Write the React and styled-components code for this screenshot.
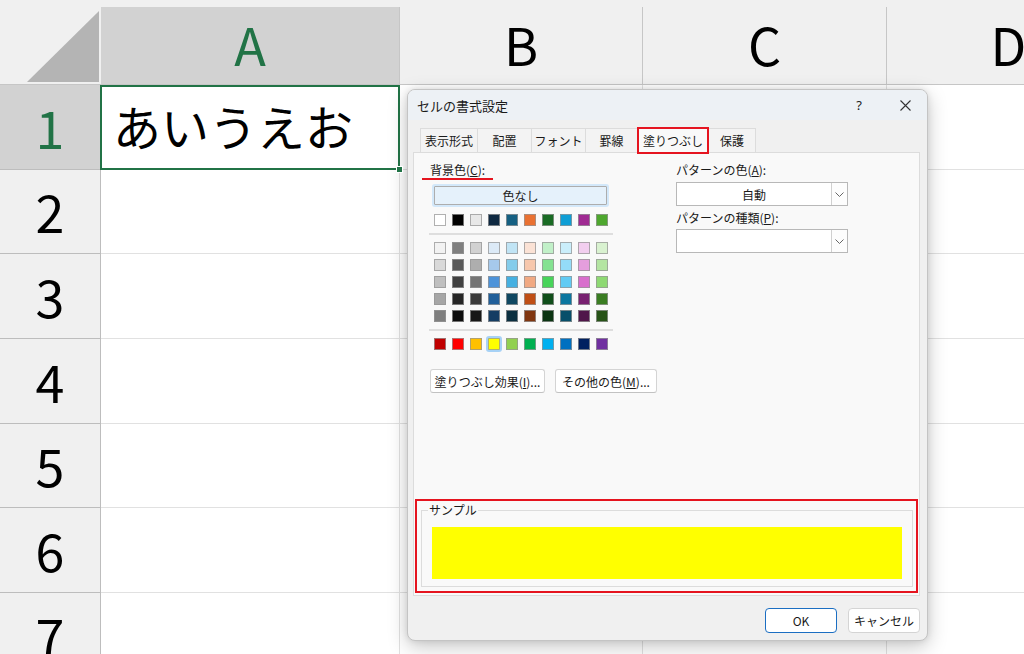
import React from "react";
import styled, { createGlobalStyle } from "styled-components";

const GlobalStyle = createGlobalStyle`
  * { box-sizing: border-box; }
  body {
    margin: 0;
    background: #f0f0f0;
    font-family: "Noto Sans CJK JP", "Noto Sans", sans-serif;
  }
`;

const columns = [
  { name: "A", selected: true },
  { name: "B" },
  { name: "C" },
  { name: "D" },
];

const themeRow = ["#ffffff", "#000000", "#e8e8e8", "#0e2841", "#156082", "#e97132", "#196b24", "#0f9ed5", "#a02b93", "#4ea72e"];

const tintRows = [
  ["#f2f2f2", "#7f7f7f", "#d1d1d1", "#dceaf7", "#c0e4f5", "#fbe2d5", "#c1f0c8", "#caeefb", "#f2ceef", "#d9f2d0"],
  ["#d9d9d9", "#595959", "#aeaeae", "#a6c9ec", "#83cceb", "#f7c7ac", "#84e291", "#94dcf8", "#e59edd", "#b4e5a2"],
  ["#bfbfbf", "#404040", "#747474", "#4d93d9", "#45b0e1", "#f1a983", "#47d45a", "#61cbf4", "#d86ecc", "#8ed973"],
  ["#a6a6a6", "#262626", "#3a3a3a", "#215f9a", "#0f4761", "#c04f15", "#104e1a", "#0b769f", "#782070", "#3a7d22"],
  ["#7f7f7f", "#0d0d0d", "#171717", "#153d63", "#0b2f40", "#803610", "#0b3412", "#074f6a", "#50164a", "#275317"],
];

const standardRow = ["#c00000", "#ff0000", "#ffc000", "#ffff00", "#92d050", "#00b050", "#00b0f0", "#0070c0", "#002060", "#7030a0"];

const tabs = [
  { label: "表示形式", width: 58 },
  { label: "配置", width: 55 },
  { label: "フォント", width: 55 },
  { label: "罫線", width: 53 },
  { label: "塗りつぶし", width: 72, active: true },
  { label: "保護", width: 48 },
];

function App() {
  return (
    <Page>
      <GlobalStyle />
      <Sheet>
        <Corner>
          <svg width="72" height="71" viewBox="0 0 72 71">
            <polygon points="0,71 72,0 72,71" fill="#b4b4b4" />
          </svg>
        </Corner>
        {columns.map((c) => (
          <ColHeader key={c.name} $selected={c.selected}>
            {c.name}
          </ColHeader>
        ))}
        {[1, 2, 3, 4, 5, 6, 7].map((row) => (
          <React.Fragment key={row}>
            <RowHeader $selected={row === 1}>{row}</RowHeader>
            {columns.map((c) =>
              row === 1 && c.name === "A" ? (
                <ActiveCell key={c.name}>
                  あいうえお
                  <FillHandle />
                </ActiveCell>
              ) : (
                <Cell key={c.name} />
              )
            )}
          </React.Fragment>
        ))}
      </Sheet>

      <Dialog>
        <TitleBar>
          <Title>セルの書式設定</Title>
          <TitleButtons>
            <Help>?</Help>
            <svg width="11" height="11" viewBox="0 0 11 11">
              <path d="M0.5 0.5 L10.5 10.5 M10.5 0.5 L0.5 10.5" stroke="#333" strokeWidth="1.1" />
            </svg>
          </TitleButtons>
        </TitleBar>

        <DialogBody>
          <TabStrip>
            {tabs.map((t) => (
              <Tab key={t.label} $width={t.width} $active={t.active}>
                {t.label}
              </Tab>
            ))}
          </TabStrip>

          <Panel>
            <Columns>
              <LeftColumn>
                <MarkedLabel>
                  背景色(<u>C</u>):
                </MarkedLabel>
                <NoColorButton>色なし</NoColorButton>
                <SwatchGrid $top={9}>
                  {themeRow.map((c, i) => (
                    <Swatch key={i} $color={c} />
                  ))}
                </SwatchGrid>
                <Separator />
                <SwatchGrid $top={0}>
                  {tintRows.flat().map((c, i) => (
                    <Swatch key={i} $color={c} />
                  ))}
                </SwatchGrid>
                <Separator />
                <SwatchGrid $top={0}>
                  {standardRow.map((c, i) => (
                    <Swatch key={i} $color={c} $selected={c === "#ffff00"} />
                  ))}
                </SwatchGrid>
                <ButtonRow>
                  <PlainButton $width={115}>
                    塗りつぶし効果(<u>I</u>)...
                  </PlainButton>
                  <PlainButton $width={102}>
                    その他の色(<u>M</u>)...
                  </PlainButton>
                </ButtonRow>
              </LeftColumn>

              <RightColumn>
                <FieldLabel>
                  パターンの色(<u>A</u>):
                </FieldLabel>
                <Dropdown $top={5}>
                  <DropValue>自動</DropValue>
                  <DropArrow>
                    <svg width="9" height="5" viewBox="0 0 9 5">
                      <path d="M0.5 0.5 L4.5 4.5 L8.5 0.5" fill="none" stroke="#666" strokeWidth="1" />
                    </svg>
                  </DropArrow>
                </Dropdown>
                <FieldLabel $top={5}>
                  パターンの種類(<u>P</u>):
                </FieldLabel>
                <Dropdown $top={4}>
                  <DropValue />
                  <DropArrow>
                    <svg width="9" height="5" viewBox="0 0 9 5">
                      <path d="M0.5 0.5 L4.5 4.5 L8.5 0.5" fill="none" stroke="#666" strokeWidth="1" />
                    </svg>
                  </DropArrow>
                </Dropdown>
              </RightColumn>
            </Columns>

            <SampleMark>
              <SampleGroup>
                <SampleLegend>サンプル</SampleLegend>
                <SampleFill />
              </SampleGroup>
            </SampleMark>
          </Panel>
        </DialogBody>

        <Footer>
          <FooterButton $primary>OK</FooterButton>
          <FooterButton>キャンセル</FooterButton>
        </Footer>
      </Dialog>
    </Page>
  );
}

export default App;

const Page = styled.div`
  position: relative;
  width: 1024px;
  height: 654px;
  overflow: hidden;
  background: #f0f0f0;
`;

const Sheet = styled.div`
  display: grid;
  grid-template-columns: 101px 299px 243px 244px 244px;
  grid-template-rows: 78px repeat(7, 84.67px);
  padding-top: 7px;
  font-family: "Noto Sans CJK JP", sans-serif;
`;

const Corner = styled.div`
  display: flex;
  align-items: flex-end;
  justify-content: flex-end;
  padding: 0 2px 2px 0;
  background: #f0f0f0;
  border-bottom: 1px solid #c6c6c6;
`;

const ColHeader = styled.div`
  display: flex;
  align-items: center;
  justify-content: center;
  background: ${(p) => (p.$selected ? "#d2d2d2" : "#f0f0f0")};
  color: ${(p) => (p.$selected ? "#217346" : "#000")};
  border-right: 1px solid #c6c6c6;
  border-bottom: 1px solid #c6c6c6;
  font-size: 52px;
  line-height: 1;
  padding-bottom: 4px;
`;

const RowHeader = styled.div`
  display: flex;
  align-items: center;
  justify-content: center;
  background: ${(p) => (p.$selected ? "#d2d2d2" : "#f0f0f0")};
  color: ${(p) => (p.$selected ? "#217346" : "#000")};
  border-right: 1px solid #bdbdbd;
  border-bottom: 1px solid #bdbdbd;
  font-size: 52px;
  line-height: 1;
`;

const Cell = styled.div`
  background: #fff;
  border-right: 1px solid #e1e1e1;
  border-bottom: 1px solid #e1e1e1;
`;

const ActiveCell = styled(Cell)`
  position: relative;
  display: flex;
  align-items: center;
  padding: 0 0 4px 12px;
  font-size: 48px;
  color: #000;
  line-height: 1;
  &::after {
    content: "";
    position: absolute;
    inset: 0 -1px -1px -1px;
    border: 2px solid #217346;
  }
`;

const FillHandle = styled.span`
  position: absolute;
  right: -4px;
  bottom: -4px;
  width: 7px;
  height: 7px;
  background: #217346;
  border: 1px solid #fff;
  z-index: 1;
`;

const Dialog = styled.div`
  position: absolute;
  left: 407px;
  top: 89px;
  width: 521px;
  height: 552px;
  display: flex;
  flex-direction: column;
  background: #f0f0f0;
  border: 1px solid #c4c4c4;
  border-radius: 8px;
  overflow: hidden;
  box-shadow: 0 6px 20px rgba(0, 0, 0, 0.22), 0 0 6px rgba(0, 0, 0, 0.1);
  font-family: "Noto Sans CJK JP", sans-serif;
  font-size: 12px;
  color: #1a1a1a;
`;

const TitleBar = styled.div`
  height: 30px;
  display: flex;
  align-items: center;
  justify-content: space-between;
  padding: 0 16px 0 9px;
  background: #edf1f5;
`;

const Title = styled.div`
  font-size: 13px;
  color: #1a1a1a;
`;

const TitleButtons = styled.div`
  display: flex;
  align-items: center;
  gap: 38px;
`;

const Help = styled.span`
  font-size: 13px;
  font-family: "Noto Sans", sans-serif;
  color: #222;
`;

const DialogBody = styled.div`
  padding: 8px 7px 0 5px;
`;

const TabStrip = styled.div`
  display: flex;
  align-items: flex-end;
  height: 24px;
  padding-left: 8px;
`;

const Tab = styled.div`
  position: relative;
  width: ${(p) => p.$width}px;
  height: ${(p) => (p.$active ? 27 : 24)}px;
  margin-bottom: ${(p) => (p.$active ? -2 : 0)}px;
  margin-left: -1px;
  display: flex;
  align-items: center;
  justify-content: center;
  background: ${(p) => (p.$active ? "#f9f9f9" : "#f3f3f3")};
  border: ${(p) => (p.$active ? "2px solid #e5141f" : "1px solid #dcdcdc")};
  border-bottom: ${(p) => (p.$active ? "2px solid #e5141f" : "none")};
  z-index: ${(p) => (p.$active ? 2 : 0)};
  font-size: 12px;
  color: #1a1a1a;
`;

const Panel = styled.div`
  height: 444px;
  display: flex;
  flex-direction: column;
  background: #f9f9f9;
  border: 1px solid #dcdcdc;
`;

const Columns = styled.div`
  display: flex;
  padding: 10px 0 0 8px;
`;

const LeftColumn = styled.div`
  width: 254px;
  display: flex;
  flex-direction: column;
`;

const RightColumn = styled.div`
  width: 172px;
  display: flex;
  flex-direction: column;
`;

const MarkedLabel = styled.div`
  width: fit-content;
  padding: 0 8px 1px;
  line-height: 14px;
  border-bottom: 2px solid #e5141f;
`;

const FieldLabel = styled.div`
  line-height: 14px;
  margin-top: ${(p) => p.$top || 0}px;
`;

const NoColorButton = styled.div`
  width: 173px;
  height: 19px;
  margin: 6px 0 0 12px;
  display: flex;
  align-items: center;
  justify-content: center;
  background: #e5f1fb;
  border: 1px solid #adadad;
  box-shadow: 0 0 0 2px #d3e8fa;
  border-radius: 1px;
`;

const SwatchGrid = styled.div`
  display: grid;
  grid-template-columns: repeat(10, 12px);
  column-gap: 6px;
  row-gap: 5px;
  margin: ${(p) => p.$top}px 0 0 12px;
`;

const Swatch = styled.div`
  position: relative;
  width: 12px;
  height: 12px;
  background: ${(p) => p.$color};
  border: 1px solid rgba(150, 150, 150, 0.75);
  &::after {
    content: "";
    display: ${(p) => (p.$selected ? "block" : "none")};
    position: absolute;
    inset: -3px;
    border: 2px solid #a7d2f6;
    border-radius: 3px;
  }
`;

const Separator = styled.div`
  width: 184px;
  height: 2px;
  margin: 7px 0 7px 7px;
  background: #dedede;
`;

const ButtonRow = styled.div`
  display: flex;
  gap: 10px;
  margin: 19px 0 0 8px;
`;

const PlainButton = styled.div`
  width: ${(p) => p.$width}px;
  height: 24px;
  display: flex;
  align-items: center;
  justify-content: center;
  background: #fff;
  border: 1px solid #d4d4d4;
  border-bottom-color: #c2c2c2;
  border-radius: 3px;
  white-space: nowrap;
`;

const Dropdown = styled.div`
  display: flex;
  height: 24px;
  margin-top: ${(p) => p.$top}px;
  background: #fff;
  border: 1px solid #b8b8b8;
`;

const DropValue = styled.div`
  flex: 1;
  display: flex;
  align-items: center;
  justify-content: center;
`;

const DropArrow = styled.div`
  width: 16px;
  display: flex;
  align-items: center;
  justify-content: center;
  border-left: 1px solid #d0d0d0;
  background: #fdfdfd;
`;

const SampleMark = styled.div`
  margin: auto 1px 2px;
  padding: 2px 3px 4px 4px;
  border: 2px solid #e5141f;
`;

const SampleGroup = styled.fieldset`
  margin: 0;
  padding: 10px 10px 7px 10px;
  border: 1px solid #dcdcdc;
`;

const SampleLegend = styled.legend`
  margin-left: -4px;
  padding: 0 1px;
  font-size: 12px;
  line-height: 14px;
  color: #1a1a1a;
`;

const SampleFill = styled.div`
  height: 52px;
  background: #ffff00;
`;

const Footer = styled.div`
  flex: 1;
  display: flex;
  justify-content: flex-end;
  align-items: flex-start;
  gap: 11px;
  padding: 12px 7px 0 0;
`;

const FooterButton = styled.div`
  width: 72px;
  height: 25px;
  display: flex;
  align-items: center;
  justify-content: center;
  background: #fff;
  border: 1px solid ${(p) => (p.$primary ? "#1b6ec2" : "#d4d4d4")};
  border-radius: 4px;
  font-size: 12px;
  color: #1a1a1a;
`;
